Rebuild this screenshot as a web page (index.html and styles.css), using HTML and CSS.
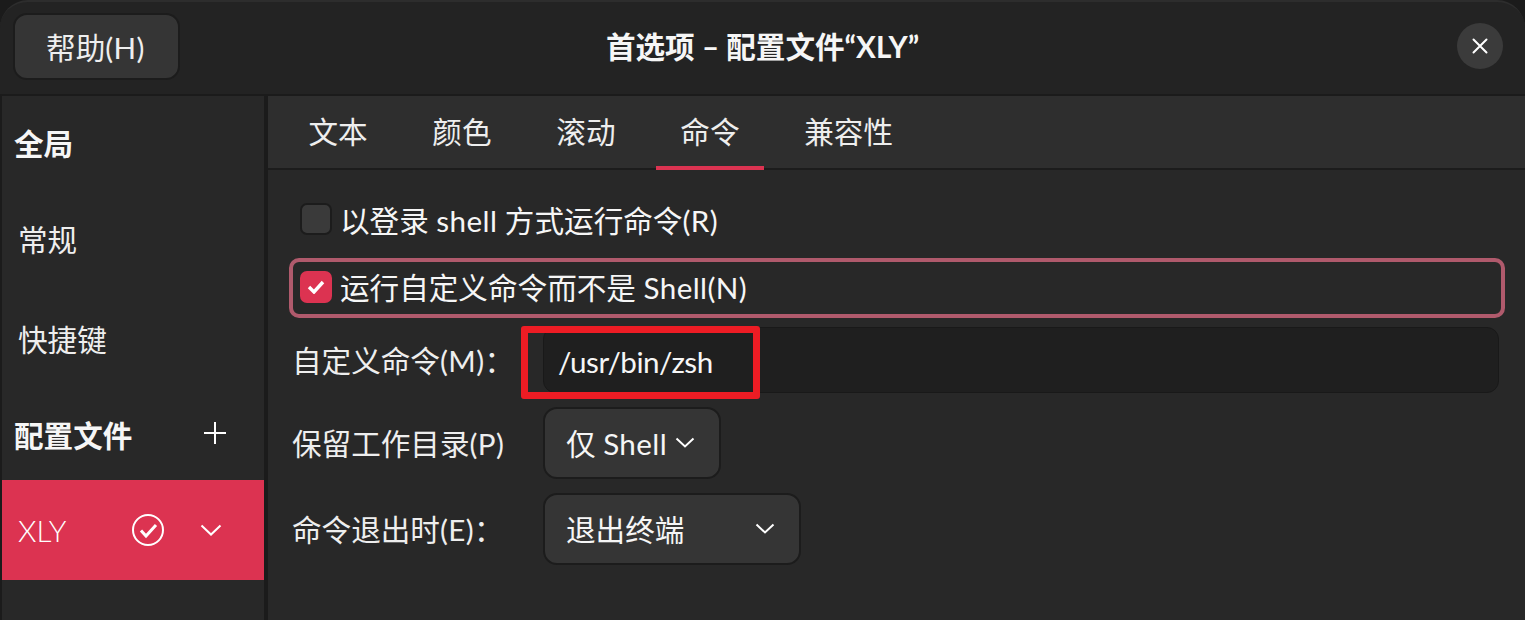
FILE: index.html
```html
<!DOCTYPE html>
<html lang="zh-CN">
<head>
<meta charset="utf-8">
<title>首选项</title>
<link rel="stylesheet" href="styles.css">
</head>
<body>
<div class="window">
  <header class="titlebar">
    <button class="help">帮助<span class="lat">(H)</span></button>
    <div class="title">首选项 – 配置文件“XLY”</div>
    <button class="close" aria-label="关闭">
      <svg width="16" height="16" viewBox="0 0 16 16"><path d="M1.5 1.5 14.5 14.5M14.5 1.5 1.5 14.5" fill="none" stroke="#fff" stroke-width="2" stroke-linecap="round"/></svg>
    </button>
  </header>
  <div class="body">
    <aside class="sidebar">
      <div class="side-head first">全局</div>
      <div class="side-item general">常规</div>
      <div class="side-item keys">快捷键</div>
      <div class="side-head profiles">
        <span>配置文件</span>
        <svg class="plus" width="24" height="24" viewBox="0 0 24 24"><path d="M12 1V23M1 12H23" fill="none" stroke="#fff" stroke-width="2"/></svg>
      </div>
      <div class="profile">
        <span class="profile-name">XLY</span>
        <svg class="profile-check" width="34" height="34" viewBox="0 0 34 34"><circle cx="17" cy="17" r="15" fill="none" stroke="#fff" stroke-width="2"/><path d="M10 17.5 15 23 25 12" fill="none" stroke="#fff" stroke-width="3"/></svg>
        <svg class="profile-chev" width="22" height="12" viewBox="0 0 22 12"><path d="M1.5 1.5 11 10.5 20.5 1.5" fill="none" stroke="#fff" stroke-width="2"/></svg>
      </div>
    </aside>
    <main class="content">
      <nav class="tabs">
        <span class="tab">文本</span>
        <span class="tab">颜色</span>
        <span class="tab">滚动</span>
        <span class="tab active">命令</span>
        <span class="tab">兼容性</span>
      </nav>
      <div class="form">
        <div class="check-row">
          <span class="box"></span>
          <span>以登录 <span class="lat">shell</span> 方式运行命令<span class="lat">(R)</span></span>
        </div>
        <div class="check-row focused">
          <span class="box on"><svg width="18" height="14" viewBox="0 0 18 14"><path d="M2 7 7 12 16 2" fill="none" stroke="#fff" stroke-width="3.4"/></svg></span>
          <span>运行自定义命令而不是 <span class="lat">Shell(N)</span></span>
        </div>
        <div class="grid">
          <label class="lab">自定义命令<span class="lat">(M)</span>：</label>
          <div class="entry"><span class="path">/usr/bin/zsh</span><span class="mark"></span></div>
          <label class="lab">保留工作目录<span class="lat">(P)</span></label>
          <div class="drop narrow"><span>仅 <span class="lat">Shell</span></span><svg width="20" height="11" viewBox="0 0 20 11"><path d="M1.5 1.5 10 9.5 18.5 1.5" fill="none" stroke="#fff" stroke-width="2"/></svg></div>
          <label class="lab">命令退出时<span class="lat">(E)</span>：</label>
          <div class="drop wide">退出终端<svg width="20" height="11" viewBox="0 0 20 11"><path d="M1.5 1.5 10 9.5 18.5 1.5" fill="none" stroke="#fff" stroke-width="2"/></svg></div>
        </div>
      </div>
    </main>
  </div>
</div>
</body>
</html>
```
FILE: styles.css
```css
* { box-sizing: border-box; }
html, body { margin: 0; height: 100%; background: #1b1b1b; overflow: hidden; }
body {
  font-family: Lato, "Noto Sans CJK SC", sans-serif;
  font-size: 29.6px;
  font-weight: 400;
  color: #f6f6f6;
}
.lat { letter-spacing: .4px; }
.path { letter-spacing: -.5px; }
.window { width: 1525px; height: 620px; display: flex; flex-direction: column; background: #1b1b1b; }
.titlebar {
  height: 94px; flex: none; display: flex; align-items: center; position: relative;
  background: #232323; border-top: 2px solid #2d2d2d; border-radius: 28px 28px 0 0; padding: 0 22px 4px 13px;
  justify-content: space-between;
}
.help {
  width: 167px; height: 67px; border-radius: 14px; border: 2px solid #1c1c1c;
  background: #353535; color: #eee; font: inherit; padding: 0 2px 0 0;
}
.title {
  position: absolute; left: 0; right: 0; top: 25px; text-align: center; font-weight: 700; line-height: 40px;
}
.close {
  width: 46px; height: 46px; border-radius: 50%; border: 0; background: #3b3b3b; padding: 0;
  display: flex; align-items: center; justify-content: center;
}
.body { flex: 1; display: flex; min-height: 0; padding-top: 2px; padding-left: 2px; background: #1b1b1b; gap: 4px; }
.sidebar { width: 262px; flex: none; background: #282828; display: flex; flex-direction: column; }
.side-head { font-weight: 700; padding-left: 12px; line-height: 40px; }
.first { margin-top: 28px; }
.side-item { padding-left: 16px; line-height: 40px; color: #eee; }
.general { margin-top: 56px; }
.keys { margin-top: 60px; }
.profiles { margin-top: 56px; display: flex; align-items: center; justify-content: space-between; padding-right: 37px; }
.plus { margin-bottom: 6px; }
.profile {
  margin-top: 24px; height: 100px; background: #dc3351; display: flex; align-items: center;
  padding-left: 16px; color: #fff; font-weight: 300;
}
.profile-name { width: 113px; }
.profile-check { flex: none; }
.profile-chev { flex: none; margin-left: 35px; }
.content { flex: 1; min-width: 0; background: #282828; }
.tabs { height: 74px; display: flex; padding-left: 16px; background: #2e2e2e; border-bottom: 2px solid #1c1c1c; gap: 16px; }
.tab { height: 74px; padding: 16px 24.4px 0; line-height: 40px; color: #eee; }
.tab.active { border-bottom: 4px solid #dc3351; }
.form { padding: 0 21px; position: relative; }
.check-row { display: flex; align-items: center; height: 62px; gap: 8px; padding-left: 11px; margin-top: 18px; }
.check-row.focused { height: 60px; border: 4px solid #b05a6c; border-radius: 10px; padding: 0 0 3px 7px; gap: 8px; width: 1216px; margin-top: 8px; }
.box { width: 32px; height: 32px; flex: none; border-radius: 7px; background: #3a3a3a; border: 2px solid #1c1c1c; display: flex; align-items: center; justify-content: center; }
.box.on { background: #dc3351; border: 0; }
.grid { display: grid; grid-template-columns: 251px 956px; row-gap: 14px; margin: 9px 0 0 3px; align-items: center; }
.lab { line-height: 40px; padding-top: 2px; color: #eee; }
.entry { height: 66px; background: #1f1f1f; border: 1px solid #191919; border-radius: 12px; padding-left: 14px; line-height: 68px; position: relative; }
.mark { position: absolute; left: -23px; top: -2px; width: 239px; height: 73px; border: 7px solid #ed1c24; border-radius: 3px; }
.drop { height: 72px; background: #353535; border: 2px solid #1c1c1c; border-radius: 14px; display: flex; align-items: center; justify-content: space-between; padding: 0 24px 2px 21px; }
.drop svg { flex: none; }
.narrow { width: 178px; }
.wide { width: 258px; }
```
